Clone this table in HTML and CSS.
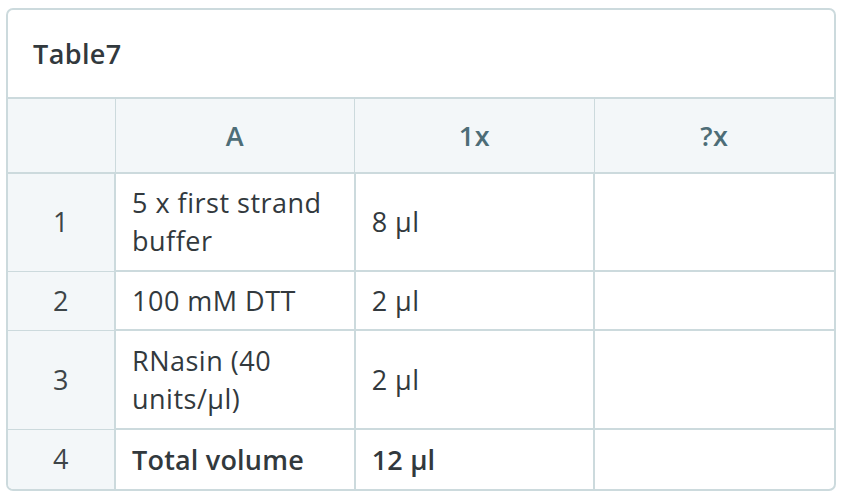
FILE: index.html
```html
<!DOCTYPE html>
<html>
<head>
<meta charset="utf-8">
<link rel="stylesheet" href="styles.css">
</head>
<body>
<div class="card">
  <div class="title">Table7</div>
  <table class="grid">
    <colgroup>
      <col class="c-num"><col class="c-data"><col class="c-data"><col class="c-data">
    </colgroup>
    <thead>
      <tr class="head-row">
        <th class="num"></th><th>A</th><th>1x</th><th class="last">?x</th>
      </tr>
    </thead>
    <tbody>
      <tr class="r-tall">
        <td class="num">1</td><td>5 x first strand buffer</td><td>8 µl</td><td class="last"></td>
      </tr>
      <tr class="r-short">
        <td class="num">2</td><td>100 mM DTT</td><td>2 µl</td><td class="last"></td>
      </tr>
      <tr class="r-tall r-tall-b">
        <td class="num">3</td><td>RNasin (40 units/µl)</td><td>2 µl</td><td class="last"></td>
      </tr>
      <tr class="r-short bottom">
        <td class="num">4</td><td><b>Total volume</b></td><td><b>12 µl</b></td><td class="last"></td>
      </tr>
    </tbody>
  </table>
</div>
</body>
</html>
```

FILE: styles.css
```css
html, body {
  margin: 0;
  padding: 0;
  background: #ffffff;
}
body {
  font-family: "Open Sans", Lato, sans-serif;
  color: #32393d;
  font-variant-ligatures: none;
}
.card {
  margin: 8px 10px 0 6px;
  border: 2px solid #ccdadd;
  border-radius: 7px;
  overflow: hidden;
  background: #ffffff;
}
.title {
  height: 89px;
  box-sizing: border-box;
  padding-left: 25px;
  display: flex;
  align-items: center;
  font-size: 27px;
  font-weight: 600;
  letter-spacing: 0.4px;
  color: #32393d;
  border-bottom: 2px solid #ccdadd;
}
.grid {
  width: 100%;
  border-collapse: collapse;
  table-layout: fixed;
  font-size: 27px;
  letter-spacing: 0.5px;
  line-height: 38px;
}
.c-num { width: 107px; }
th {
  height: 73px;
  background: #f3f7f9;
  color: #4d6d77;
  font-weight: 600;
  text-align: center;
  border-left: 1px solid #ccdadd;
  border-bottom: 2px solid #ccdadd;
  padding: 0;
}
th.num { border-left: none; }
td {
  border: 2px solid #ccdadd;
  padding: 9px 12px 9px 16px;
  text-align: left;
  vertical-align: middle;
}
td.num {
  background: #f3f7f9;
  text-align: center;
  border: 1px solid #ccdadd;
  border-left: none;
  color: #3d4548;
  padding: 0;
}
td.last { border-right: none; }
tr.bottom td { border-bottom: none; }
.r-tall td { height: 78px; }
.r-tall-b td { height: 79px; }
.r-short td { height: 39px; }
.bottom td { height: 41px; }
b { font-weight: 600; letter-spacing: 0.2px; }
```
